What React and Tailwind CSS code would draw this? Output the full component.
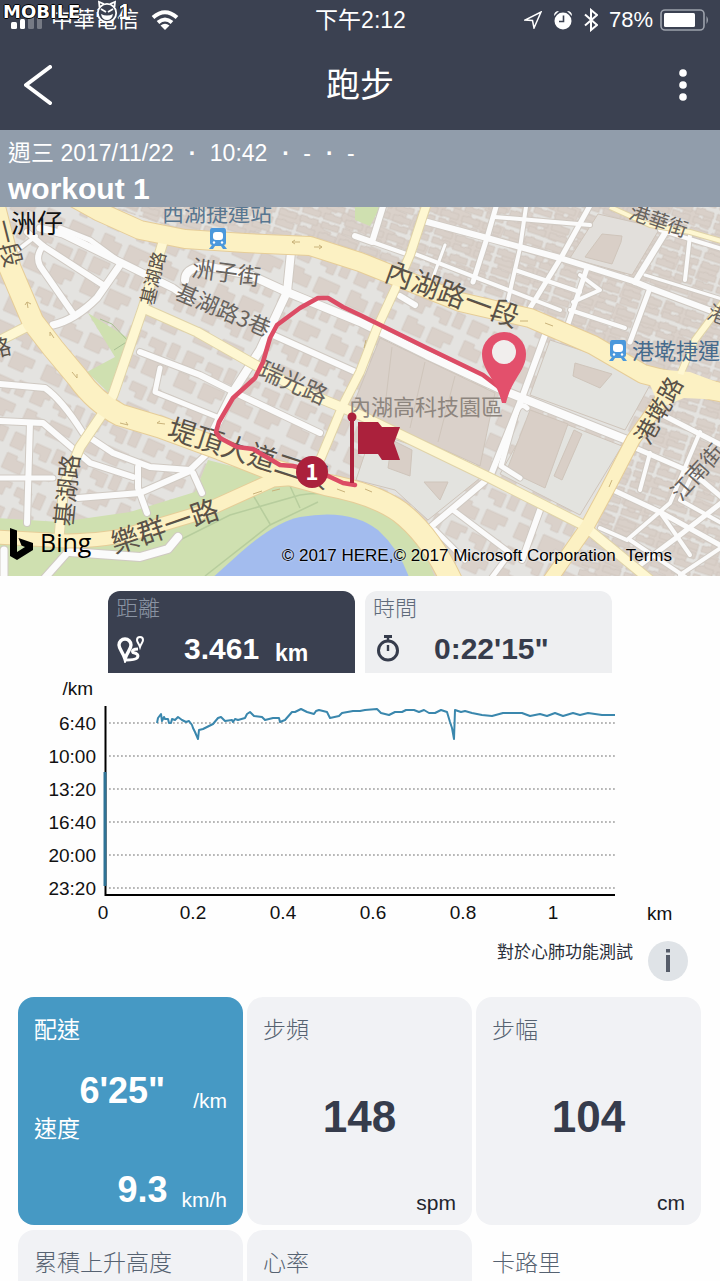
import React, { useState } from 'react';

const FONT = 'font-[Liberation_Sans,Noto_Sans_CJK_TC,sans-serif]';

// wide yellow roads: d, width
const mainRoads = [
    ['M60 190 L100 212 L140 230 L185 239 L245 243 L310 246 L360 262 L400 278 L460 302 L530 318 L593 345 L643 374 L690 386 L730 394', 18],
    ['M-6 205 L10 268 L33 322 L53 348 L78 378 Q95 402 120 415 L160 427 L220 449 L273 470 L327 485 Q375 494 400 512 Q430 535 452 582', 21],
    ['M-6 537 L67 541 Q110 540 133 533 L200 513 L273 480 L300 478', 13],
    ['M680 382 L667 392 L633 440 L607 490 L587 527 L550 580', 13],
];

const yellowRoads = [
    ['M163 242 L143 308 L113 395 L103 413 L80 447 L64 485 L59 537', 9],
    ['M143 308 L197 332 L250 362 L300 390 L360 415 L397 433 L490 478 L583 525 L650 580', 9],
    ['M428 200 L410 255 L397 285 L377 328 L360 372 L343 405 L320 460', 8],
    ['M-5 343 L30 325', 9],
    ['M610 207 L650 225 L690 232 L725 242', 4],
    ['M725 300 L695 340 L680 375', 6],
];

const whiteRoads = [
    ['M40 228 L63 234 L120 262 L173 288 L190 300', 7],
    ['M60 228 L90 240 L120 262', 5],
    ['M36 236 L15 252', 4],
    ['M27 232 L43 246 L103 285', 6],
    ['M43 246 Q35 256 40 266 L72 312', 6],
    ['M120 265 L97 298 Q75 320 53 325', 7],
    ['M185 280 Q185 268 205 266 L250 275 L287 292 L360 322 L427 355 L507 392 L627 440', 8],
    ['M291 252 L287 292 L260 350 L233 392 L214 430', 8],
    ['M140 352 L200 375 L240 395 L320 433', 6],
    ['M160 368 L155 392 L217 417', 5],
    ['M273 335 L360 374', 6],
    ['M0 384 L45 388 Q62 400 83 433 L113 453 L150 467 L190 470 L213 448', 6],
    ['M0 421 L43 423 L90 463 L133 477', 6],
    ['M30 423 L27 523', 6],
    ['M0 478 L53 478', 5],
    ['M78 498 L140 493 L190 471', 6],
    ['M138 467 L138 488 L147 513', 6],
    ['M193 473 L202 493', 6],
    ['M4 550 L4 580', 7],
    ['M67 553 L43 580', 7],
    ['M70 552 L140 557 L168 549 L178 537', 8],
    ['M355 236 L372 242 L385 200', 6],
    ['M372 242 L412 256', 4],
    ['M420 220 L487 238 L560 258 L633 281 L650 288 L725 316', 6],
    ['M498 200 L487 238 L473 282', 5],
    ['M527 200 L520 248 L508 300', 4],
    ['M593 200 L562 256 L530 308', 5],
    ['M587 268 L567 327', 5],
    ['M495 217 L590 225', 4],
    ['M410 252 L560 310', 4],
    ['M515 270 L580 292', 4],
    ['M445 245 L432 280', 3],
    ['M670 225 L635 282', 6],
    ['M650 288 L630 342', 5],
    ['M570 310 L625 328', 4],
    ['M660 230 L725 250', 4],
    ['M645 275 L725 300', 3],
    ['M690 235 L685 280', 4],
    ['M580 275 L600 290 L573 302', 4],
    ['M545 335 L523 395 L490 477 L427 530', 6],
    ['M527 408 Q522 402 517 410 L501 466 L520 478', 5],
    ['M400 296 L415 305', 6],
    ['M540 510 L522 560', 6],
    ['M453 510 L510 553 L490 580', 5],
    ['M435 530 L465 560', 5],
    ['M653 410 L725 447', 5],
    ['M633 447 L693 473 L725 500', 5],
    ['M613 490 L660 512 L725 548', 5],
    ['M700 432 L670 503 L627 540 L600 528', 4],
    ['M650 453 L640 490', 4],
    ['M725 500 L680 535 L640 565', 5],
    ['M660 512 L690 555', 4],
    ['M693 473 L680 500 L725 525', 4],
    ['M630 540 L690 580', 4],
    ['M725 545 L680 575', 4],
];

const placeNames = [
    { text: '西湖捷運站', x: 162, y: 221, angle: 0, size: 22, color: '#587690' },
    { text: '洲仔', x: 11, y: 233, angle: 0, size: 26, color: '#111111' },
    { text: '一段', x: -6, y: 222, angle: 76, size: 24, color: '#5a5248' },
    { text: '路', x: -9, y: 358, angle: -12, size: 22, color: '#5a5248' },
    { text: '洲子街', x: 191, y: 276, angle: 8, size: 23, color: '#68635e' },
    { text: '基湖路3巷', x: 174, y: 298, angle: 23, size: 22, color: '#68635e' },
    { text: '基湖路', x: 153, y: 306, angle: -76, size: 18, color: '#5a5248' },
    { text: '瑞光路', x: 257, y: 376, angle: 24, size: 24, color: '#68635e' },
    { text: '內湖路一段', x: 383, y: 280, angle: 20, size: 28, color: '#5a5248' },
    { text: '港華街', x: 628, y: 218, angle: 19, size: 20, color: '#68635e' },
    { text: '港墘捷運', x: 632, y: 359, angle: 0, size: 22, color: '#456a8c' },
    { text: '港墘路', x: 649, y: 446, angle: -61, size: 24, color: '#5a5248' },
    { text: '江南街', x: 681, y: 502, angle: -48, size: 22, color: '#68635e' },
    { text: '港', x: 706, y: 318, angle: 20, size: 20, color: '#68635e' },
    { text: '內湖高科技園區', x: 349, y: 415, angle: 0, size: 22, color: '#8d857e' },
    { text: '堤頂大道二段', x: 166, y: 437, angle: 18, size: 28, color: '#5a5248' },
    { text: '樂群一路', x: 115, y: 554, angle: -19, size: 28, color: '#5a5248' },
    { text: '基湖路', x: 72, y: 527, angle: -84, size: 24, color: '#5a5248' },
];

const paceLabels = ['6:40', '10:00', '13:20', '16:40', '20:00', '23:20'];
const kmLabels = ['0', '0.2', '0.4', '0.6', '0.8', '1'];

const pacePoints =
    '157,723 158,718 161,714 162,721 164,717 165,719 168,719 169,723 171,723 172,719 175,720 178,717 182,720 186,722 189,721 192,725 193,728 195,732 198,739 199,730 203,729 213,724 218,718 221,717 225,721 232,720 233,722 235,719 238,720 245,718 247,714 250,712 254,716 262,717 265,720 273,718 279,718 280,722 285,720 292,712 295,712 301,709 307,712 314,714 316,711 319,710 327,712 330,718 339,716 342,713 353,711 360,711 365,710 377,709 381,713 389,715 395,712 402,712 406,710 414,710 419,712 424,710 429,713 435,713 441,710 447,712 450,722 452,728 454,739 455,710 461,712 465,711 472,713 482,715 492,716 503,713 522,713 530,716 540,714 547,716 555,713 563,716 573,713 580,715 588,713 602,715 615,715';

const Train = ({ x, y }) => (
    <g transform={`translate(${x} ${y})`} fill="#4a98dc">
        <path d="M2 0 H14 Q16 0 16 3 V15 Q16 17 14 17 L17 21 H13 L11 18 H5 L3 21 H-1 L2 17 Q0 17 0 15 V3 Q0 0 2 0 Z" />
        <rect x="3" y="4" width="10" height="8" rx="3" fill="#fff" />
        <circle cx="4" cy="14.5" r="1.2" fill="#fff" />
        <circle cx="12" cy="14.5" r="1.2" fill="#fff" />
    </g>
);

const StatusBar = () => (
    <div className="relative grid grid-cols-3 items-center h-10 pl-[11px] pr-[10px] text-[22px] leading-none">
        <div className="flex items-center gap-2">
            <svg viewBox="0 0 32 20" className="w-8 h-5" fill="#fff">
                <rect x="0" y="12" width="6" height="7" rx="1.5" />
                <rect x="9" y="9" width="5" height="10" rx="1.5" />
                <rect x="17" y="5" width="6" height="14" rx="1.5" opacity="0.3" />
                <rect x="26" y="1" width="5" height="18" rx="1.5" opacity="0.3" />
            </svg>
            <span>中華電信</span>
            <svg viewBox="0 0 28 20" className="w-7 h-5 ml-1" fill="none" stroke="#fff" strokeWidth="4">
                <path d="M2 7.5 Q14 -3 26 7.5" />
                <path d="M7 12.5 Q14 6.5 21 12.5" />
                <path d="M14 20 L9.5 15.5 Q14 12 18.5 15.5 Z" fill="#fff" stroke="none" />
            </svg>
        </div>
        <div className="text-center text-[23px]">下午2:12</div>
        <div className="flex items-center justify-end gap-[7px]">
            <svg viewBox="0 0 18 18" className="w-[18px] h-[18px] mr-1" fill="none" stroke="#fff" strokeWidth="1.5">
                <path d="M17 1 L10 17 L8.5 9.5 L1 9 Z" />
            </svg>
            <svg viewBox="0 0 20 20" className="w-5 h-5" fill="#fff">
                <circle cx="10" cy="11" r="8.5" />
                <path d="M1 6 Q1 1 6 1 Z M19 6 Q19 1 14 1 Z" />
                <path d="M10.5 5.5 V11.5 H6" fill="none" stroke="#3b4151" strokeWidth="1.6" />
            </svg>
            <svg viewBox="0 0 14 24" className="w-[14px] h-6 ml-1" fill="none" stroke="#fff" strokeWidth="2">
                <path d="M1 6.5 L13 17 L7 22 V2 L13 7 L1 17.5" />
            </svg>
            <span className="ml-1">78%</span>
            <svg viewBox="0 0 50 22" className="w-[50px] h-[22px]">
                <rect x="1" y="1" width="43" height="20" rx="4" fill="none" stroke="#9da2ac" strokeWidth="1.6" />
                <rect x="4" y="4" width="31" height="14" rx="1.5" fill="#fff" />
                <path d="M46.5 7 Q49.5 11 46.5 15 Z" fill="#9da2ac" />
            </svg>
        </div>
        {/* forum watermark */}
        <div className="absolute left-[3px] top-0 flex items-center h-6">
            <span className="font-[DejaVu_Sans] font-bold text-[18px] leading-6 [text-shadow:1px_0_#000,-1px_0_#000,0_1px_#000,0_-1px_#000]">MOBILE</span>
            <svg viewBox="0 0 22 24" className="w-[22px] h-6 ml-4" fill="none" stroke="#fff" strokeWidth="1.8">
                <circle cx="11" cy="13" r="9.2" fill="#3b4151" />
                <path d="M3.5 7 L3 2 L8 4 M18.5 7 L19 2 L14 4" />
                <path d="M5 9 L10 12 M17 9 L12 12" />
                <path d="M5 14 Q11 17 17 14 Q16 20 11 20 Q6 20 5 14 Z" fill="#fff" stroke="none" />
            </svg>
            <span className="font-bold text-[22px] leading-6 [text-shadow:1px_0_#000,-1px_0_#000]">1</span>
        </div>
    </div>
);

const RouteMap = () => (
    <div className="relative h-[369px] overflow-hidden">
        <svg viewBox="0 207 720 369" preserveAspectRatio="xMidYMid slice" className="w-full h-full">
            <defs>
                <pattern id="blocks" width="62" height="48" patternUnits="userSpaceOnUse" patternTransform="rotate(24)">
                    <g fill="#dad1ca" stroke="#d1c8c0" strokeWidth="0.8">
                        <path d="M4 4 H22 V10 H17 V19 H4 Z" />
                        <path d="M28 6 H44 V20 H36 V15 H28 Z" />
                        <path d="M49 3 H58 V18 H49 Z" />
                        <path d="M5 26 H16 V30 H25 V42 H5 Z" />
                        <path d="M32 27 H55 V36 H48 V43 H32 Z" />
                    </g>
                </pattern>
                <pattern id="houses" width="22" height="20" patternUnits="userSpaceOnUse" patternTransform="rotate(18)">
                    <g fill="#d9d0c9" stroke="#cec4bc" strokeWidth="0.8">
                        <path d="M1 2 H6 V1 H10 V2 H19 V8 H1 Z" />
                        <path d="M1 11 H8 V12 H13 V11 H19 V17 H1 Z" />
                    </g>
                </pattern>
            </defs>
            <rect x="0" y="200" width="720" height="380" fill="#e4e3e0" />
            <rect x="0" y="200" width="720" height="380" fill="url(#blocks)" />
            <path d="M90 200 H725 V390 L640 366 L590 338 L530 308 L400 268 L300 238 L180 230 Z" fill="url(#houses)" />
            <path d="M650 395 L725 400 V580 H575 L612 490 Z" fill="url(#houses)" />

            {/* campus and open blocks */}
            <g stroke="#cfc5bb" strokeWidth="1">
                <path d="M380 338 L495 393 L480 466 L352 408 Z" fill="#dad1ca" />
                <path d="M392 347 L384 415 M425 362 L410 428 M455 376 L438 442" fill="none" />
                <path d="M550 340 L605 358 L650 385 L625 430 L530 395 Z" fill="#e3e3df" />
                <path d="M535 412 L622 446 L580 515 L500 474 Z" fill="#e3e3df" />
                <path d="M530 410 L568 424 L545 488 L507 470 Z" fill="#d9cfc7" />
                <path d="M574 430 L582 434 L562 480 L554 476 Z" fill="#d9cfc7" />
                <path d="M575 363 L612 374 L600 388 L573 376 Z" fill="#d9cfc7" />
                <path d="M598 214 L660 228 L632 275 L570 258 Z" fill="#e2dfdb" />
                <path d="M602 234 L622 236 L621 242 L612 264 L585 257 Z" fill="#d9cfc7" />
                <path d="M372 432 L415 446 L480 478 L428 520 L395 490 L356 480 Z" fill="#e3e3df" />
                <path d="M392 440 L412 450 L410 476 L388 468 Z M424 482 L440 500 L448 482 Z" fill="#d9cfc7" />
            </g>

            {/* parks and river */}
            <g fill="#cfe0b0">
                <path d="M88 313 L128 338 L110 394 L87 372 L115 357 Z" />
                <path d="M355 200 H384 L370 226 L355 220 Z" />
                <path d="M-5 518 L60 522 L130 512 L195 492 L208 460 L270 476 L340 490 L385 505 L420 540 L436 580 H-5 Z" />
            </g>
            <path d="M100 319 L112 324 L128 341 L114 350" fill="none" stroke="#a9c193" strokeWidth="1" />
            <path d="M170 545 L230 515 L300 495 Q350 488 395 515 M205 576 L270 525 L318 502 M250 490 L270 524 M290 486 L300 508" fill="none" stroke="#b7cd9d" strokeWidth="1.5" />
            <path d="M210 580 L240 553 Q275 522 300 517 Q350 508 378 530 Q400 550 410 580 Z" fill="#a3bcee" />

            {/* street network, casing first */}
            {whiteRoads.map(([d, w]) => (
                <path key={d} d={d} fill="none" stroke="#cfc9c2" strokeWidth={w + 2} strokeLinecap="round" strokeLinejoin="round" />
            ))}
            {whiteRoads.map(([d, w]) => (
                <path key={d} d={d} fill="none" stroke="#fbfbfb" strokeWidth={w} strokeLinecap="round" strokeLinejoin="round" />
            ))}
            {yellowRoads.map(([d, w]) => (
                <path key={d} d={d} fill="none" stroke="#e0d3a8" strokeWidth={w + 2} strokeLinejoin="round" />
            ))}
            {mainRoads.map(([d, w]) => (
                <path key={d} d={d} fill="none" stroke="#e6cd98" strokeWidth={w + 2} strokeLinejoin="round" />
            ))}
            <path d="M643 368 L690 372 L725 385 V400 L684 398 L660 408 Z" fill="#fcf1c3" />
            {yellowRoads.map(([d, w]) => (
                <path key={d} d={d} fill="none" stroke="#fef7d2" strokeWidth={w} strokeLinejoin="round" />
            ))}
            {mainRoads.map(([d, w]) => (
                <path key={d} d={d} fill="none" stroke="#fcf1c3" strokeWidth={w} strokeLinejoin="round" />
            ))}
            <g fill="none" stroke="#c9b27a" strokeWidth="1">
                <path d="M300 242 H292 L295 240 M292 242 L295 244 M314 247 H322 L319 245 M322 247 L319 249" />
                <path d="M28 308 L27 302 L25 305 M27 302 L31 304 M50 332 L54 338 M50 332 V336 M72 372 L77 378 V374" />
                <path d="M120 423 L128 425 L126 422 M165 424 L157 423 L160 421 M520 321 L528 321 M545 323 L553 326" />
                <path d="M253 494 L262 491 M272 491 L280 489 M337 489 L345 492 M365 489 L372 492 M612 480 L609 487 M366 340 L364 348" />
            </g>

            <Train x={210} y={228} />
            <Train x={610} y={340} />

            {placeNames.map((p) => (
                <text
                    key={p.text + p.x}
                    transform={`translate(${p.x} ${p.y}) rotate(${p.angle})`}
                    fontSize={p.size}
                    fill={p.color}
                    fontFamily="Noto Sans CJK TC, sans-serif"
                    fontWeight="400"
                >
                    {p.text}
                </text>
            ))}

            {/* recorded track */}
            <path
                d="M355 485 L343 483 L328 476 L310 470 L293 466 L280 465 L263 455 L253 449 L237 447 L220 438 L216 432 L219 422 L233 398 L255 378 L263 362 L270 338 L277 325 L300 308 L318 298 L328 298 L343 307 L360 315 L427 348 L483 375 L500 388"
                fill="none"
                stroke="#dc4c65"
                strokeWidth="4.5"
                strokeLinecap="round"
                strokeLinejoin="round"
            />
            <path d="M504 332 A22 22 0 0 1 526 354 C526 371 512 378 506 403 H502 C496 378 482 371 482 354 A22 22 0 0 1 504 332 Z" fill="#e3506c" />
            <circle cx="504" cy="352" r="12" fill="#f1eeed" />
            <g fill="#ab213c">
                <rect x="350" y="417" width="4" height="66" />
                <circle cx="352" cy="417" r="4.5" />
                <path d="M358 422 H378 L382 427 H400 L394 443 L400 460 H382 L378 454 H358 Z" />
                <circle cx="312" cy="472" r="16" />
            </g>
            <text x="312" y="480" textAnchor="middle" fontSize="22" fontWeight="700" fill="#fff" fontFamily="Noto Sans CJK TC, sans-serif">1</text>
        </svg>
        <div className="absolute inset-x-0 bottom-[12px] flex items-end justify-between pl-[10px] pr-12 text-black">
            <div className="flex items-center gap-[7px] h-10">
                <svg viewBox="0 0 23 32" className="w-[23px] h-8">
                    <path d="M0 0 L7 2.5 V24 L15 19 L11.5 17.5 L8.5 10 L23 15 V22 L7 32 L0 28 Z" />
                </svg>
                <span className="pb-1 font-[Open_Sans] text-[25px] leading-none">Bing</span>
            </div>
            <div className="flex gap-[10px] text-[17px] leading-4 [text-shadow:0_0_2px_#fff]">
                <span>© 2017 HERE,© 2017 Microsoft Corporation</span>
                <a href="#terms">Terms</a>
            </div>
        </div>
    </div>
);

const PaceChart = () => (
    <svg viewBox="0 673 720 260" className="w-full h-auto font-[Liberation_Sans]" fontSize="19" fill="#111">
        <text x="93" y="695" textAnchor="end">/km</text>
        {paceLabels.map((label, i) => (
            <g key={label}>
                <text x="96" y={730 + i * 33} textAnchor="end">{label}</text>
                <line x1="109" x2="615" y1={723 + i * 33} y2={723 + i * 33} stroke="#a0a0a0" strokeWidth="1.6" strokeDasharray="1.8 2.2" />
            </g>
        ))}
        <path d="M105.5 706 V895 H615" fill="none" stroke="#000" strokeWidth="2" />
        <path d="M105 772 V886" stroke="#2f7396" strokeWidth="3" />
        <polyline points={pacePoints} fill="none" stroke="#3a87ad" strokeWidth="2" strokeLinejoin="round" />
        {kmLabels.map((label, i) => (
            <text key={label} x={103 + i * 90} y="919" textAnchor="middle">{label}</text>
        ))}
        <text x="647" y="920">km</text>
    </svg>
);

const StatCard = ({ label, value, unit }) => (
    <div className="flex flex-col h-[228px] rounded-2xl bg-[#f1f2f5] px-4 pt-[19px] pb-2">
        <div className="text-[23px] leading-7 font-light text-[#566271]">{label}</div>
        {value && <div className="grow flex items-center justify-center text-[44px] font-bold text-[#363c4c]">{value}</div>}
        {unit && <div className="text-right text-[21px] leading-7 text-[#22252e]">{unit}</div>}
    </div>
);

const App = () => {
    const [tab, setTab] = useState('distance');

    return (
        <div className={`h-screen overflow-hidden bg-[#fefefe] ${FONT}`}>
            <header className="bg-[#3b4151] text-white">
                <StatusBar />
                <div className="grid grid-cols-3 items-center h-[90px] px-6">
                    <button aria-label="返回" className="justify-self-start">
                        <svg viewBox="0 0 28 40" className="w-7 h-10" fill="none" stroke="#fff" strokeWidth="4" strokeLinecap="round" strokeLinejoin="round">
                            <path d="M26 2 L2 20 L26 38" />
                        </svg>
                    </button>
                    <h1 className="text-center text-[34px] leading-none">跑步</h1>
                    <button aria-label="選單" className="justify-self-end px-[9px]">
                        <svg viewBox="0 0 8 32" className="w-2 h-8" fill="#fff">
                            <circle cx="4" cy="4" r="3.8" />
                            <circle cx="4" cy="16" r="3.8" />
                            <circle cx="4" cy="28" r="3.8" />
                        </svg>
                    </button>
                </div>
            </header>

            <section className="h-[77px] bg-[#919dab] text-white px-2 pt-2">
                <div className="flex items-center gap-[15px] text-[23px] leading-[30px]">
                    <span>週三 2017/11/22</span>
                    <span className="w-[6px] text-center font-bold">·</span>
                    <span>10:42</span>
                    <span className="w-[6px] text-center font-bold">·</span>
                    <span>-</span>
                    <span className="w-[6px] text-center font-bold">·</span>
                    <span>-</span>
                </div>
                <div className="text-[30px] leading-[42px] font-bold">workout 1</div>
            </section>

            <RouteMap />

            <div className="grid grid-cols-2 gap-[10px] mx-[108px] mt-[15px]">
                <button onClick={() => setTab('distance')} aria-pressed={tab === 'distance'} className="h-[82px] rounded-t-xl bg-[#3a4050] text-left px-2 pt-1">
                    <div className="text-[22px] leading-7 font-light text-[#8a94a3]">距離</div>
                    <div className="flex items-center h-[52px] text-white">
                        <svg viewBox="0 0 28 28" className="w-7 h-7" fill="none" stroke="#fff">
                            <path d="M9 4 A6 6 0 0 1 15 10 C15 14 11 17 9 24 C7 17 3 14 3 10 A6 6 0 0 1 9 4 Z" strokeWidth="3.4" />
                            <path d="M24 2 A3 3 0 0 1 27 5 C27 7 25 9 24 12 C23 9 21 7 21 5 A3 3 0 0 1 24 2 Z" strokeWidth="2" />
                            <path d="M22 14 Q15 14 17 17.5 Q24 19 21 23 Q19 25 10 25" strokeWidth="3" />
                        </svg>
                        <span className="ml-10 text-[30px] leading-none font-bold">3.461</span>
                        <span className="ml-4 pt-2 text-[23px] leading-none font-bold">km</span>
                    </div>
                </button>
                <button onClick={() => setTab('time')} aria-pressed={tab === 'time'} className="h-[82px] rounded-t-xl bg-[#eeeff1] text-left px-2 pt-1">
                    <div className="text-[22px] leading-7 font-light text-[#5f6b7b]">時間</div>
                    <div className="flex items-center h-[52px] text-[#363c4c]">
                        <svg viewBox="0 0 28 28" className="w-7 h-7" fill="none" stroke="#363c4c" strokeWidth="3">
                            <circle cx="15" cy="15.5" r="9.5" />
                            <path d="M11 1.5 H19" />
                            <path d="M15 10 V16 M15 3 V6" strokeWidth="2.4" />
                        </svg>
                        <span className="ml-[33px] text-[30px] leading-none font-bold">0:22'15"</span>
                    </div>
                </button>
            </div>

            <PaceChart />

            <div className="flex items-start justify-end gap-[15px] pr-8 pt-2 h-16">
                <span className="pt-[2px] text-[17px] leading-5 text-[#2b303b]">對於心肺功能測試</span>
                <button aria-label="說明" className="flex items-center justify-center w-10 h-10 rounded-full bg-[#dfe3e7]">
                    <svg viewBox="0 0 6 26" className="w-[6px] h-[26px]" fill="#555c69">
                        <rect x="1" y="1" width="4" height="3.5" />
                        <rect x="1" y="7" width="4" height="17" />
                    </svg>
                </button>
            </div>

            <div className="grid grid-cols-3 gap-x-1 gap-y-[5px] ml-[18px] mr-[19px]">
                <div className="h-[228px] rounded-2xl bg-[#4699c4] px-4 pt-[19px] text-white">
                    <div className="text-[23px] leading-7">配速</div>
                    <div className="flex items-end justify-end h-[71px]">
                        <span className="pb-1 text-[36px] leading-10 font-bold">6'25"</span>
                        <span className="ml-7 text-[21px] leading-7">/km</span>
                    </div>
                    <div className="text-[23px] leading-7">速度</div>
                    <div className="flex items-end justify-end h-[71px]">
                        <span className="pb-1 text-[36px] leading-10 font-bold">9.3</span>
                        <span className="ml-[14px] text-[21px] leading-7">km/h</span>
                    </div>
                </div>
                <StatCard label="步頻" value="148" unit="spm" />
                <StatCard label="步幅" value="104" unit="cm" />
                <StatCard label="累積上升高度" />
                <StatCard label="心率" />
                <div className="px-4 pt-[19px] text-[23px] leading-7 font-light text-[#566271]">卡路里</div>
            </div>
        </div>
    );
};

export default App;
